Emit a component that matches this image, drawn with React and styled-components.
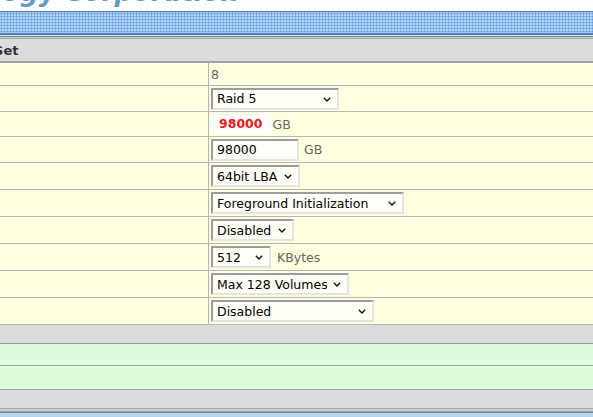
import styled, { createGlobalStyle } from "styled-components";

const GlobalStyle = createGlobalStyle`
  html, body {
    margin: 0;
    padding: 0;
    background: #fff;
  }
  body {
    font-family: "DejaVu Sans", Verdana, sans-serif;
    overflow: hidden;
  }
`;

const Page = styled.div`
  width: 593px;
  height: 417px;
  overflow: hidden;
`;

const Banner = styled.div`
  height: 11px;
  overflow: hidden;
  background: #fff;
`;

const Brand = styled.div`
  margin: -23px 0 0 -109px;
  font: italic bold 26px "DejaVu Sans", Verdana, sans-serif;
  line-height: 30px;
  color: #5f9dcb;
  white-space: nowrap;
`;

const Stripe = styled.div`
  height: 21px;
  border-top: 1px solid #4a7fc6;
  border-bottom: 2px solid #4a7fc6;
  background-color: #b0d3f5;
  background-image: radial-gradient(circle, #5f95de 0.9px, transparent 1.1px);
  background-size: 3px 3px;
`;

const Rule = styled.div`
  height: ${(p) => p.h || 1}px;
  background: ${(p) => p.c};
`;

const HeadBar = styled.div`
  height: 22px;
  display: flex;
  align-items: center;
  background: #dcdcdc;
  border-bottom: 2px solid #a3a3a3;
  font: bold 13px "DejaVu Sans", Verdana, sans-serif;
  color: #333;
  white-space: nowrap;
  overflow: hidden;
`;

const HeadText = styled.span`
  margin-left: -43px;
`;

const Row = styled.div`
  display: flex;
  height: ${(p) => p.h}px;
  background: #ffffdf;
  border-bottom: 1px solid #b6b6b6;
`;

const LabelCell = styled.div`
  width: 208px;
  flex: none;
  border-right: 1px solid #b6b6b6;
`;

const ValueCell = styled.div`
  flex: 1;
  display: flex;
  align-items: center;
  padding-left: 2px;
  font-size: 12.5px;
  color: #666;
`;

const Plain = styled.span`
  color: #666;
`;

const RedValue = styled.span`
  display: inline-block;
  height: 20px;
  line-height: 20px;
  padding: 0 8px 0 8px;
  background: #fffff9;
  color: #f4141c;
  font-weight: bold;
`;

const Unit = styled.span`
  margin-left: ${(p) => p.gap}px;
  color: #666;
`;

const SelectWrap = styled.span`
  position: relative;
  display: inline-flex;
  width: ${(p) => p.w}px;
  height: 22px;
`;

const Select = styled.select`
  appearance: none;
  -webkit-appearance: none;
  width: 100%;
  height: 100%;
  box-sizing: border-box;
  margin: 0;
  padding: 0 20px 0 4px;
  border: 2px solid;
  border-color: #9c9c9c #e4e4e4 #e4e4e4 #9c9c9c;
  border-radius: 0;
  background: #fffff7;
  font: 12.5px "DejaVu Sans", Verdana, sans-serif;
  color: #000;
  outline: none;
`;

const Chevron = styled.svg`
  position: absolute;
  right: 8px;
  top: 9px;
  width: 8px;
  height: 5px;
  pointer-events: none;
`;

const TextInput = styled.input`
  width: ${(p) => p.w}px;
  height: 22px;
  box-sizing: border-box;
  margin: 0;
  padding: 0 4px;
  border: 2px solid;
  border-color: #9c9c9c #e4e4e4 #e4e4e4 #9c9c9c;
  background: #fffff9;
  font: 12.5px "DejaVu Sans", Verdana, sans-serif;
  color: #000;
  outline: none;
`;

const Band = styled.div`
  height: ${(p) => p.h}px;
  background: ${(p) => (p.green ? "#dcfcdc" : "#dcdcdc")};
  border-bottom: ${(p) => (p.line ? `1px solid ${p.line}` : "none")};
`;

function Dropdown({ w, value, options }) {
  return (
    <SelectWrap w={w}>
      <Select defaultValue={value}>
        {options.map((o) => (
          <option key={o}>{o}</option>
        ))}
      </Select>
      <Chevron viewBox="0 0 8 5">
        <path d="M0.8 0.8 L4 4 L7.2 0.8" fill="none" stroke="#111" strokeWidth="1.4" />
      </Chevron>
    </SelectWrap>
  );
}

export default function App() {
  return (
    <Page>
      <GlobalStyle />
      <Banner>
        <Brand>Technology Corporation</Brand>
      </Banner>
      <Stripe />
      <Rule c="#d2e3f2" />
      <Rule c="#7d8893" />
      <Rule c="#c9c9c9" />
      <Rule c="#a9a9a9" />
      <HeadBar>
        <HeadText>Raid Set</HeadText>
      </HeadBar>

      <Row h={22}>
        <LabelCell />
        <ValueCell>
          <Plain>8</Plain>
        </ValueCell>
      </Row>
      <Row h={25}>
        <LabelCell />
        <ValueCell>
          <Dropdown w={128} value="Raid 5" options={["Raid 0", "Raid 1", "Raid 3", "Raid 5", "Raid 6"]} />
        </ValueCell>
      </Row>
      <Row h={24}>
        <LabelCell />
        <ValueCell>
          <RedValue>98000</RedValue>
          <Unit gap={2}>GB</Unit>
        </ValueCell>
      </Row>
      <Row h={25}>
        <LabelCell />
        <ValueCell>
          <TextInput w={88} defaultValue="98000" />
          <Unit gap={5}>GB</Unit>
        </ValueCell>
      </Row>
      <Row h={26}>
        <LabelCell />
        <ValueCell>
          <Dropdown w={89} value="64bit LBA" options={["No", "64bit LBA"]} />
        </ValueCell>
      </Row>
      <Row h={26}>
        <LabelCell />
        <ValueCell>
          <Dropdown
            w={193}
            value="Foreground Initialization"
            options={["Foreground Initialization", "Background Initialization", "No Init (To Rescue Volume)"]}
          />
        </ValueCell>
      </Row>
      <Row h={26}>
        <LabelCell />
        <ValueCell>
          <Dropdown w={83} value="Disabled" options={["Disabled", "Enabled"]} />
        </ValueCell>
      </Row>
      <Row h={26}>
        <LabelCell />
        <ValueCell>
          <Dropdown w={60} value="512" options={["4", "8", "16", "32", "64", "128", "256", "512"]} />
          <Unit gap={6}>KBytes</Unit>
        </ValueCell>
      </Row>
      <Row h={26}>
        <LabelCell />
        <ValueCell>
          <Dropdown w={138} value="Max 128 Volumes" options={["Max 16 Volumes", "Max 128 Volumes"]} />
        </ValueCell>
      </Row>
      <Row h={26}>
        <LabelCell />
        <ValueCell>
          <Dropdown w={163} value="Disabled" options={["Disabled", "Enabled"]} />
        </ValueCell>
      </Row>

      <Band h={18} line="#9a9a9a" />
      <Band h={21} green line="#a3a3a3" />
      <Band h={23} green line="#a3a3a3" />
      <Band h={18} />
      <Rule c="#a8a8a8" />
      <Rule c="#cacaca" h={2} />
      <Rule c="#a0a0a0" />
      <Rule c="#6f8ea6" />
      <Rule c="#b3d5ec" h={6} />
    </Page>
  );
}
